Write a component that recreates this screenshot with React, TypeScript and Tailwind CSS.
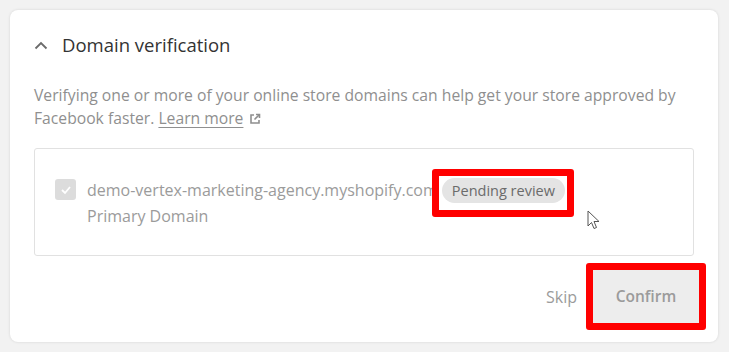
import React from "react";

export default function App() {
  return (
    <div
      className="w-[729px] h-[352px] bg-[#f2f2f2] pt-[10px] pl-[10px] overflow-hidden"
      style={{ fontFamily: '"Open Sans", "Noto Sans", sans-serif' }}
    >
      <div className="w-[708px] h-[332px] bg-white rounded-[8px] shadow-[0_0_3px_rgba(0,0,0,0.12)] px-[24px] pt-[24px]">
        <div className="flex items-center h-[22px]">
          <svg width="14" height="9" viewBox="0 0 14 9">
            <path d="M1.5 7.5 L7 2 L12.5 7.5" fill="none" stroke="#6b6b6b" strokeWidth="1.8" />
          </svg>
          <span className="ml-[14px] text-[18.5px] text-[#333333] leading-[22px]">Domain verification</span>
        </div>
        <p className="mt-[28px] text-[15.7px] leading-[23px] text-[#8f8f8f]">
          Verifying one or more of your online store domains can help get your store approved by
          <br />
          Facebook faster.{" "}
          <span className="underline underline-offset-[3px]">Learn more</span>
          <svg width="12" height="12" viewBox="0 0 12 12" className="inline-block ml-[6px] align-[-1px]">
            <path d="M5 2 H2 V10 H10 V7" fill="none" stroke="#8f8f8f" strokeWidth="1.6" />
            <path d="M7 1.5 H10.5 V5" fill="none" stroke="#8f8f8f" strokeWidth="1.6" />
            <path d="M10.5 1.5 L5.5 6.5" fill="none" stroke="#8f8f8f" strokeWidth="1.6" />
          </svg>
        </p>
        <div className="mt-[18px] h-[108px] border border-[#e1e1e1] rounded-[3px] pl-[20px] pt-[30px] relative">
          <div className="flex items-start">
            <div className="w-[21px] h-[21px] rounded-[3px] bg-[#dcdcdc] flex items-center justify-center">
              <svg width="12" height="10" viewBox="0 0 12 10">
                <path d="M2 5 L5 8 L10 2" fill="none" stroke="#ffffff" strokeWidth="1.8" />
              </svg>
            </div>
            <div className="ml-[11px] text-[16px] leading-[26px] text-[#9b9b9b] -mt-[2px]">
              <div className="flex items-center">
                <span>demo-vertex-marketing-agency.myshopify.com</span>
                <span className="relative ml-[4px] inline-flex">
                  <span className="rounded-full bg-[#e4e4e4] text-[#6b6b6b] text-[14.5px] leading-[25px] px-[10px]">
                    Pending review
                  </span>
                  <span className="absolute left-[-10px] right-[-9px] top-[-9px] bottom-[-14px] border-[7px] border-[#ff0000] rounded-[3px]" />
                </span>
              </div>
              <div>Primary Domain</div>
            </div>
          </div>
          <svg width="14" height="21" viewBox="0 0 14 21" className="absolute left-[552px] top-[61px]">
            <path d="M1 1 L1 16 L4.5 12.5 L7 18.5 L9.5 17.5 L7 11.5 L12 11.5 Z" fill="#ffffff" stroke="#555" strokeWidth="1" strokeLinejoin="round" />
          </svg>
        </div>
        <div className="mt-[14px] flex justify-end items-center mr-[-5px]">
          <span className="text-[16px] text-[#9b9b9b] mr-[16px]">Skip</span>
          <div className="relative">
            <div className="w-[106px] h-[53px] bg-[#ededed] flex items-center justify-center text-[15.5px] font-semibold text-[#9b9b9b]">
              Confirm
            </div>
            <span className="absolute left-[-7px] right-[-7px] top-[-7px] bottom-[-7px] border-[7px] border-[#ff0000] rounded-[3px]" />
          </div>
        </div>
      </div>
    </div>
  );
}
